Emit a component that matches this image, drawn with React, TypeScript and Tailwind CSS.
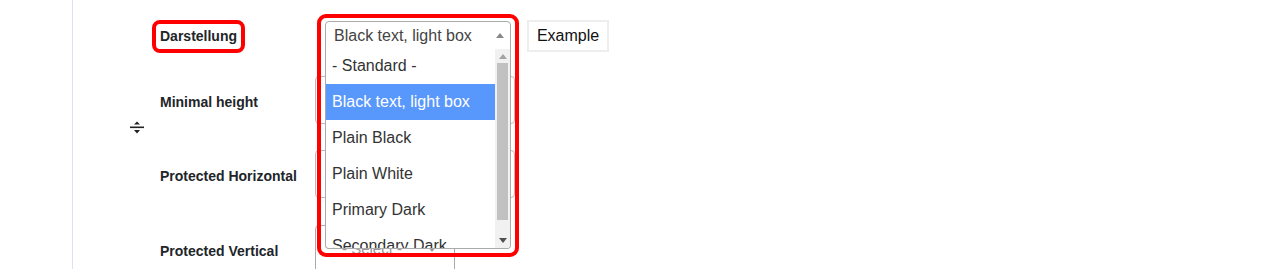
import React from "react";

const options = [
  "- Standard -",
  "Black text, light box",
  "Plain Black",
  "Plain White",
  "Primary Dark",
  "Secondary Dark",
  "Secondary Light",
];

function Handle() {
  return (
    <svg width="14" height="14" viewBox="0 0 14 14">
      <polygon points="4,3.5 10,3.5 7,0.5" fill="#222" />
      <rect x="0" y="5.5" width="14" height="1.6" fill="#222" />
      <polygon points="4,9 10,9 7,12.5" fill="#222" />
    </svg>
  );
}

export default function App() {
  return (
    <div className="relative w-[1280px] h-[269px] overflow-hidden bg-white font-['Liberation_Sans',Arial,sans-serif] text-[#212529]">
      <div className="flex h-full">
        <div className="w-[72px] shrink-0" />
        <div className="flex h-full border-l border-[#dde0ee]">
          <div className="w-[57px] shrink-0" />
          <div className="w-[30px] shrink-0 pt-[121px]">
            <Handle />
          </div>
          <div className="flex flex-col">
            {/* Row 1 */}
            <div className="flex items-start pt-[20px]">
              <div className="w-[155px] shrink-0">
                <div className="-ml-[8px] flex h-[33px] w-[93px] items-center rounded-[8px] border-4 border-[#ff0000] pl-[4px] text-[14px] font-bold">
                  Darstellung
                </div>
              </div>
              <div className="ml-[10px] mt-[1px] flex h-[29px] w-[186px] items-center justify-between rounded-t-[4px] border border-[#aaaaaa] pl-[8px] pr-[6px] text-[16px] text-[#444]">
                <span>Black text, light box</span>
                <svg width="8" height="5" viewBox="0 0 8 5">
                  <polygon points="0,5 8,5 4,0" fill="#888" />
                </svg>
              </div>
              <div className="ml-[16px] flex h-[32px] w-[82px] items-center justify-center border-2 border-[#eeeeee] text-[16px] text-[#111]">
                Example
              </div>
            </div>

            {/* Row 2 */}
            <div className="mt-[23px] flex h-[48px] items-center">
              <div className="mt-[4px] w-[155px] shrink-0 text-[14px] font-bold">Minimal height</div>
              <div className="h-[48px] w-[200px] rounded-[4px] border border-[#bbbbbb]" />
            </div>

            {/* Row 3 */}
            <div className="mt-[26px] flex h-[48px] items-center">
              <div className="mt-[4px] w-[155px] shrink-0 text-[14px] font-bold">Protected Horizontal</div>
              <div className="h-[48px] w-[200px] rounded-[4px] border border-[#bbbbbb]" />
            </div>

            {/* Row 4 */}
            <div className="mt-[27px] flex items-start">
              <div className="mt-[16px] w-[155px] shrink-0 text-[14px] font-bold">Protected Vertical</div>
              <div className="flex h-[60px] w-[140px] items-start justify-between rounded-[4px] border border-[#aaaaaa] pl-[26px] pr-[18px] pt-[12px] text-[15px] text-[#999]">
                <span>- Select -</span>
                <svg width="8" height="5" viewBox="0 0 8 5" className="mt-[9px]">
                  <polygon points="0,0 8,0 4,5" fill="#999" />
                </svg>
              </div>
            </div>
          </div>
        </div>
      </div>

      {/* Open dropdown list */}
      <div className="absolute left-[325px] top-[49px] flex h-[200px] w-[186px] overflow-hidden rounded-b-[4px] border-x border-b border-[#aaaaaa] bg-white">
        <div className="-mt-px flex-1 overflow-hidden">
          {options.map((o, i) => (
            <div
              key={o}
              className={
                i === 1
                  ? "flex h-[36px] items-center bg-[#5897fb] pl-[6px] text-[16px] text-white"
                  : "flex h-[36px] items-center pl-[6px] text-[16px] text-[#333]"
              }
            >
              {o}
            </div>
          ))}
        </div>
        <div className="flex w-[15px] shrink-0 flex-col items-center bg-[#f1f1f1]">
          <div className="flex h-[14px] w-full items-center justify-center">
            <svg width="8" height="5" viewBox="0 0 8 5">
              <polygon points="0,5 8,5 4,0" fill="#a3a3a3" />
            </svg>
          </div>
          <div className="h-[157px] w-[11px] bg-[#c1c1c1]" />
          <div className="flex-1" />
          <div className="flex h-[15px] w-full items-center justify-center">
            <svg width="8" height="5" viewBox="0 0 8 5">
              <polygon points="0,0 8,0 4,5" fill="#505050" />
            </svg>
          </div>
        </div>
      </div>

      {/* Red highlight around dropdown */}
      <div className="pointer-events-none absolute left-[317px] top-[14px] h-[243px] w-[202px] rounded-[9px] border-4 border-[#ff0000]" />
    </div>
  );
}
